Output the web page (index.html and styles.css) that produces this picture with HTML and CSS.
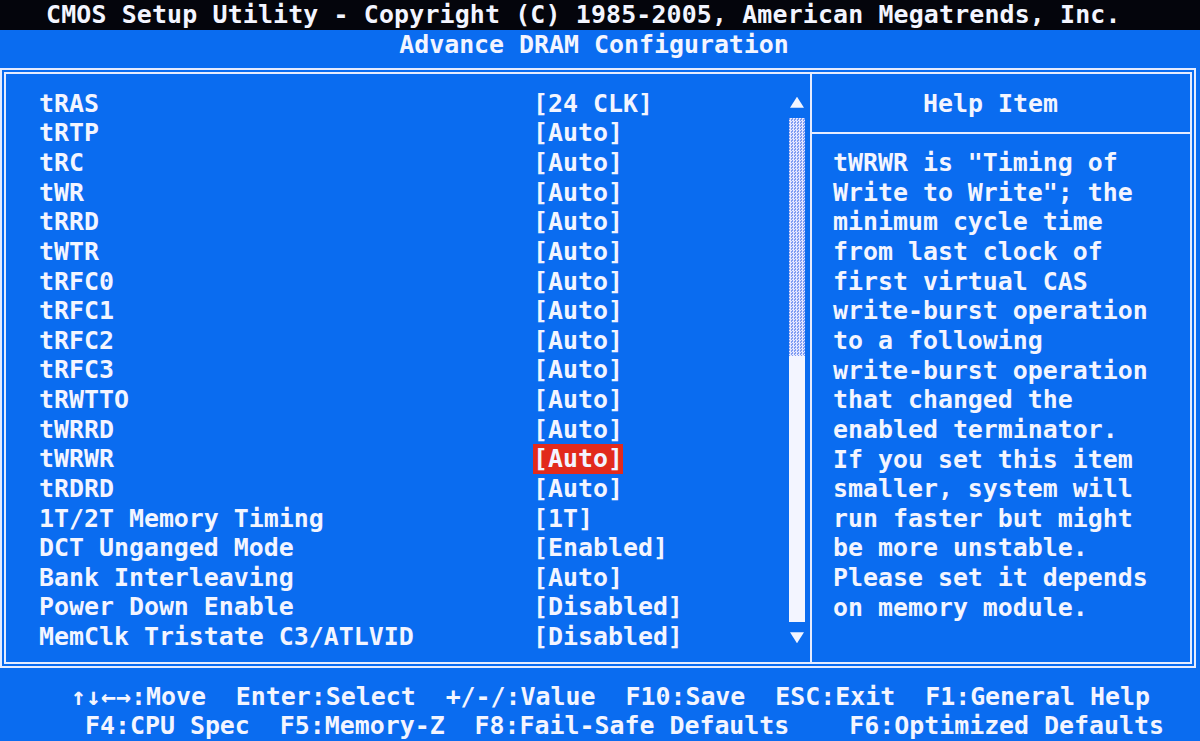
FILE: index.html
```html
<!DOCTYPE html>
<html lang="en">
<head>
    <meta charset="UTF-8">
    <meta name="viewport" content="width=device-width, initial-scale=1.0">
    <title>CMOS Setup Utility - Advance DRAM Configuration</title>
    <link rel="stylesheet" href="styles.css">
</head>
<body>
    <div class="screen">
        <div class="title-bar">CMOS Setup Utility - Copyright (C) 1985-2005, American Megatrends, Inc.</div>
        <div class="page-title">Advance DRAM Configuration</div>

        <div class="frame">
            <div class="menu">
                <div class="items">
                    <div class="item"><span class="label">tRAS</span><span class="value">[24 CLK]</span></div>
                    <div class="item"><span class="label">tRTP</span><span class="value">[Auto]</span></div>
                    <div class="item"><span class="label">tRC</span><span class="value">[Auto]</span></div>
                    <div class="item"><span class="label">tWR</span><span class="value">[Auto]</span></div>
                    <div class="item"><span class="label">tRRD</span><span class="value">[Auto]</span></div>
                    <div class="item"><span class="label">tWTR</span><span class="value">[Auto]</span></div>
                    <div class="item"><span class="label">tRFC0</span><span class="value">[Auto]</span></div>
                    <div class="item"><span class="label">tRFC1</span><span class="value">[Auto]</span></div>
                    <div class="item"><span class="label">tRFC2</span><span class="value">[Auto]</span></div>
                    <div class="item"><span class="label">tRFC3</span><span class="value">[Auto]</span></div>
                    <div class="item"><span class="label">tRWTTO</span><span class="value">[Auto]</span></div>
                    <div class="item"><span class="label">tWRRD</span><span class="value">[Auto]</span></div>
                    <div class="item"><span class="label">tWRWR</span><span class="value selected">[Auto]</span></div>
                    <div class="item"><span class="label">tRDRD</span><span class="value">[Auto]</span></div>
                    <div class="item"><span class="label">1T/2T Memory Timing</span><span class="value">[1T]</span></div>
                    <div class="item"><span class="label">DCT Unganged Mode</span><span class="value">[Enabled]</span></div>
                    <div class="item"><span class="label">Bank Interleaving</span><span class="value">[Auto]</span></div>
                    <div class="item"><span class="label">Power Down Enable</span><span class="value">[Disabled]</span></div>
                    <div class="item"><span class="label">MemClk Tristate C3/ATLVID</span><span class="value">[Disabled]</span></div>
                </div>
                <div class="scrollbar">
                    <div class="arrow up"></div>
                    <div class="track"></div>
                    <div class="thumb"></div>
                    <div class="arrow down"></div>
                </div>
            </div>

            <div class="help">
                <div class="help-title">Help Item</div>
                <div class="help-rule"></div>
                <div class="help-text">tWRWR is "Timing of
Write to Write"; the
minimum cycle time
from last clock of
first virtual CAS
write-burst operation
to a following
write-burst operation
that changed the
enabled terminator.
If you set this item
smaller, system will
run faster but might
be more unstable.
Please set it depends
on memory module.</div>
            </div>
        </div>

        <div class="keys">
            <div class="keys-row first">↑↓←→:Move  Enter:Select  +/-/:Value  F10:Save  ESC:Exit  F1:General Help</div>
            <div class="keys-row second">F4:CPU Spec  F5:Memory-Z  F8:Fail-Safe Defaults    F6:Optimized Defaults</div>
        </div>
    </div>
</body>
</html>
```

FILE: styles.css
```css
body {
    margin: 0;
    background-color: #0a6cf0; /* BIOS blue */
    color: #f3f5ff;
    font-family: "DejaVu Sans Mono", "Liberation Mono", monospace;
    font-weight: bold;
    font-size: 24.9px;
    line-height: 29.64px;
    overflow: hidden;
}
.screen {
    width: 1200px;
    height: 741px;
}
.title-bar {
    height: 29.64px;
    padding-left: 46px;
    background-color: #04050c;
    white-space: pre;
    letter-spacing: 0.15px;
}
.page-title {
    height: 29.64px;
    text-align: center;
    padding-right: 12px;
}

/* double-line box around the menu */
.frame {
    display: flex;
    box-sizing: border-box;
    width: 1196px;
    height: 600px;
    margin-top: 8.72px;
    border: 6px double #e6ecff;
}
.menu {
    flex: 1;
    display: flex;
    padding-top: 14.9px;
}
.items {
    flex: 1;
    padding-left: 33px;
}
.item {
    display: grid;
    grid-template-columns: 494px auto;
    height: 29.64px;
    white-space: pre;
}
.value {
    justify-self: start;
}
.value.selected {
    background-color: #e22a1c; /* red highlight */
}

.scrollbar {
    display: flex;
    flex-direction: column;
    width: 16px;
    margin-right: 5px;
}
.arrow {
    height: 29.64px;
}
.arrow::before {
    content: "";
    display: block;
    width: 14px;
    height: 11px;
    margin: 8px auto 0;
    background-color: #f3f5ff;
    clip-path: polygon(50% 0, 100% 100%, 0 100%);
}
.arrow.down::before {
    margin-top: 10px;
    clip-path: polygon(0 0, 100% 0, 50% 100%);
}
.track {
    height: 237.12px;
    background: repeating-conic-gradient(#e4e6ff 0 25%, #7d9cf2 0 50%) 0 0 / 3px 3px;
}
.thumb {
    height: 266.76px;
    background-color: #f3f5ff;
}

.help {
    width: 378px;
    border-left: 2px solid #e6ecff;
    padding-top: 14.9px;
}
.help-title {
    padding-left: 111px;
}
.help-rule {
    height: 2px;
    margin: 13.2px 0 14.44px;
    background-color: #e6ecff;
}
.help-text {
    padding-left: 21px;
    white-space: pre;
}

.keys {
    margin-top: 13.7px;
}
.keys-row {
    height: 29.64px;
    white-space: pre;
}
.keys-row.first {
    padding-left: 71px;
}
.keys-row.second {
    padding-left: 85px;
}
```
